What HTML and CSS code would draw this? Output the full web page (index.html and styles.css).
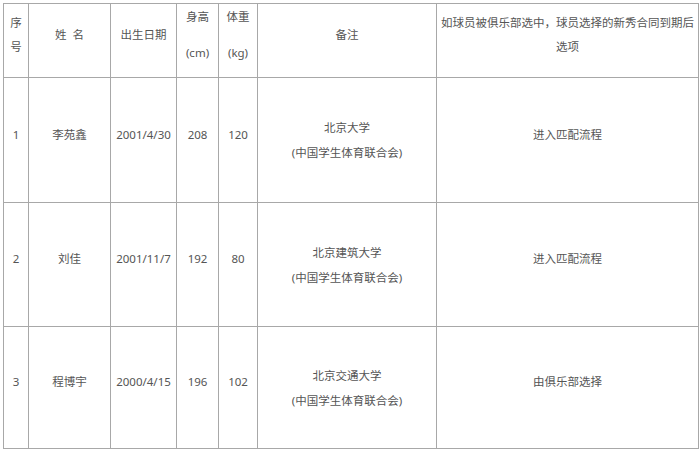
FILE: index.html
```html
<!DOCTYPE html>
<html lang="zh-CN">
<head>
<meta charset="utf-8">
<link rel="stylesheet" href="styles.css">
</head>
<body>
<table class="draft">
  <colgroup>
    <col class="c-no"><col class="c-name"><col class="c-date"><col class="c-h"><col class="c-w"><col class="c-note"><col class="c-opt">
  </colgroup>
  <tr class="head">
    <td>序<br>号</td>
    <td>姓&nbsp;&nbsp;名</td>
    <td>出生日期</td>
    <td class="tall">身高<br><br>(cm)</td>
    <td class="tall">体重<br><br>(kg)</td>
    <td>备注</td>
    <td>如球员被俱乐部选中，球员选择的新秀合同到期后<br>选项</td>
  </tr>
  <tr class="r1">
    <td>1</td>
    <td>李苑鑫</td>
    <td>2001/4/30</td>
    <td>208</td>
    <td>120</td>
    <td class="note">北京大学<br>(中国学生体育联合会)</td>
    <td>进入匹配流程</td>
  </tr>
  <tr class="r2">
    <td>2</td>
    <td>刘佳</td>
    <td>2001/11/7</td>
    <td>192</td>
    <td>80</td>
    <td class="note">北京建筑大学<br>(中国学生体育联合会)</td>
    <td>进入匹配流程</td>
  </tr>
  <tr class="r3">
    <td>3</td>
    <td>程博宇</td>
    <td>2000/4/15</td>
    <td>196</td>
    <td>102</td>
    <td class="note">北京交通大学<br>(中国学生体育联合会)</td>
    <td>由俱乐部选择</td>
  </tr>
</table>
</body>
</html>
```

FILE: styles.css
```css
html, body {
  margin: 0;
  padding: 0;
  background: #ffffff;
}

body {
  padding: 3px 0 0 3px;
  font-family: "Noto Sans", "Noto Sans CJK SC", sans-serif;
  font-size: 11.5px;
  color: #555555;
}

.draft {
  border-collapse: collapse;
  table-layout: fixed;
  width: 695px;
}

.c-no { width: 25px; }
.c-name { width: 82px; }
.c-date { width: 66px; }
.c-h { width: 42px; }
.c-w { width: 39px; }
.c-note { width: 179px; }
.c-opt { width: 262px; }

.draft td {
  border: 1px solid #a8a8a8;
  text-align: center;
  vertical-align: middle;
  line-height: 24px;
  padding: 0 2px 11px;
  white-space: nowrap;
}

.draft td.tall {
  line-height: 18px;
}

.draft td.note {
  line-height: 25px;
  padding-bottom: 0;
}

.head { height: 74px; }
.r1 { height: 125px; }
.r2 { height: 124px; }
.r3 { height: 122px; }
```
